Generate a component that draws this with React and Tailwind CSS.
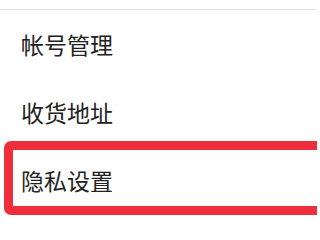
import React from 'react';

const items = ['帐号管理', '收货地址', '隐私设置'];

export default function App() {
  return (
    <div
      className="w-[317px] h-[217px] bg-white overflow-hidden"
      style={{ fontFamily: '"Noto Sans CJK SC", "Noto Sans", sans-serif' }}
    >
      <div className="h-[9px]" />
      <div className="border-t border-[#e6e6e6]">
        {items.map((label, i) => (
          <div key={label} className="relative h-[68px] flex items-center pl-[21px]">
            <span className="text-[23px] leading-none text-[#222222]">{label}</span>
            {i === 2 && (
              // red highlight box drawn over the last row
              <div className="absolute left-[4px] -right-[12px] -top-[5px] -bottom-[1px] border-[9px] border-[#ef2e3b] rounded-[7px]" />
            )}
          </div>
        ))}
      </div>
    </div>
  );
}
